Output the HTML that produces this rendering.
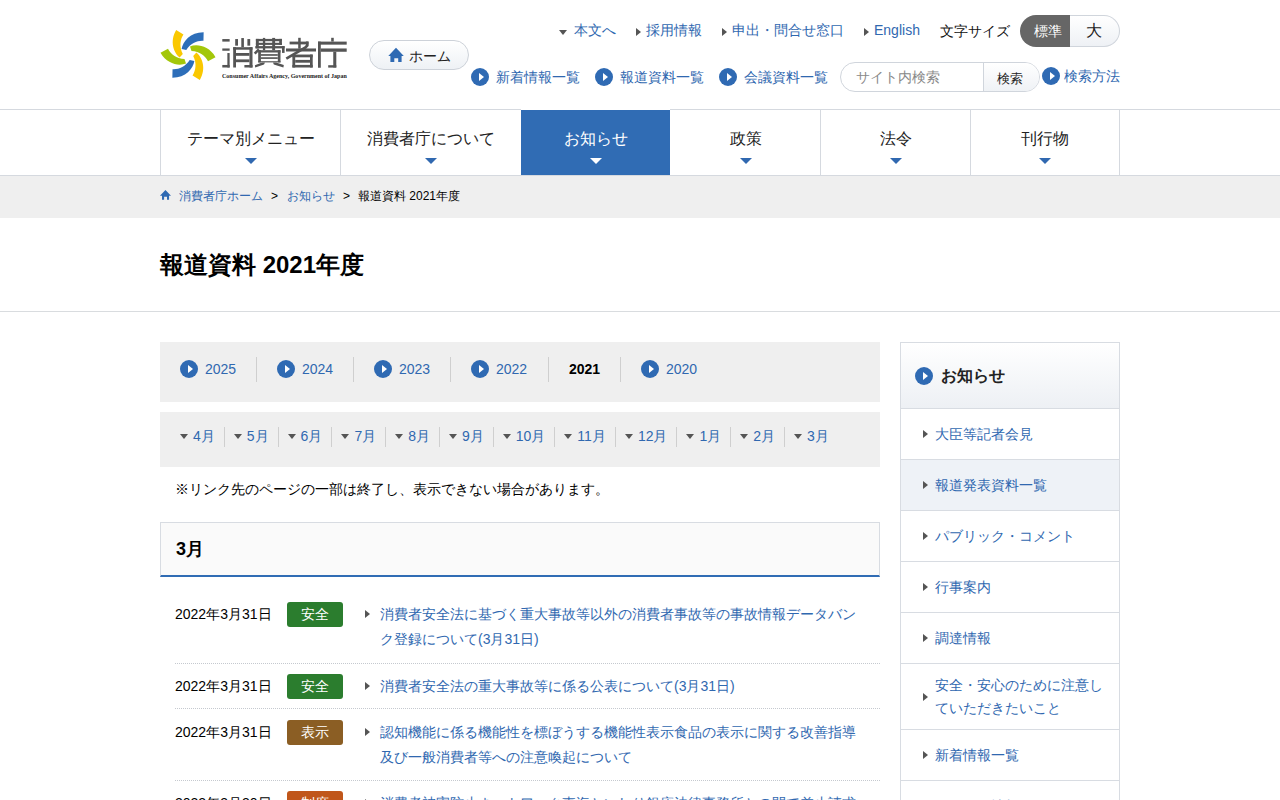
<!DOCTYPE html>
<html lang="ja"><head><meta charset="utf-8"><title>報道資料 2021年度 | 消費者庁</title>
<style>
*{box-sizing:border-box;margin:0;padding:0}
html,body{width:1280px;height:800px;overflow:hidden;background:#fff}
body{font-family:"Liberation Sans",sans-serif;color:#222;font-size:14px;position:relative}
a{color:#3068b0;text-decoration:none}
.abs{position:absolute;white-space:nowrap}
.ci{position:absolute;width:18px;height:18px;border-radius:50%;background:#2f6ab3}
.ci:after{content:"";position:absolute;left:8px;top:5px;border-left:5.5px solid #fff;border-top:4px solid transparent;border-bottom:4px solid transparent}
.tri-r{position:absolute;width:0;height:0;border-left:5px solid #555;border-top:4px solid transparent;border-bottom:4px solid transparent}
.tri-d{position:absolute;width:0;height:0;border-top:5px solid #555;border-left:4px solid transparent;border-right:4px solid transparent}
/* header */
#hdr-line{position:absolute;left:0;top:109px;width:1280px;height:1px;background:#d5d9df}
#nav{position:absolute;left:0;top:0;width:1280px;height:176px}
#nav .nb{position:absolute;top:109px;height:66px;background:#306cb4;border-top:1px solid #fff}
#nav .nl{position:absolute;top:110px;width:1px;height:65px;background:#d5d9df}
#nav .nt{position:absolute;top:129px;text-align:center;font-size:16px;color:#222;height:40px;line-height:20px}
#nav .nt i{position:absolute;left:50%;margin-left:-6px;top:29px;border-top:6px solid #3068b0;border-left:6px solid transparent;border-right:6px solid transparent}
#nav .nt.on{color:#fff}
#nav .nt.on i{border-top-color:#fff}
#navbot{position:absolute;left:0;top:175px;width:1280px;height:1px;background:#d5d9df}
#bc{position:absolute;left:0;top:176px;width:1280px;height:42px;background:#efefef;font-size:12px}
#title{position:absolute;left:160px;top:249px;font-size:24px;font-weight:bold;color:#000;white-space:nowrap}
#hr{position:absolute;left:0;top:311px;width:1280px;height:1px;background:#d9dcdf}
/* years */
#years{position:absolute;left:160px;top:342px;width:720px;height:60px;background:#efefef}
#months{position:absolute;left:160px;top:412px;width:720px;height:55px;background:#efefef}
.sep{position:absolute;width:1px;background:#cfcfcf}
#note{position:absolute;left:175px;top:481px;font-size:14px;color:#000;white-space:nowrap}
#mh{position:absolute;left:160px;top:522px;width:720px;height:55px;background:#fafafa;border:1px solid #d8dce2;border-bottom:2px solid #306cb4}
#mh b{position:absolute;left:15px;top:13.5px;font-size:18px;color:#000}
.row{position:absolute;left:175px;width:705px}
.row:before,.row:after{content:"";position:absolute;bottom:0;height:0;border-bottom:1px dotted #c5c9cf}
.row:before{left:0;width:183px}.row:after{left:182px;width:523px}
.row.nb:before,.row.nb:after{display:none}
.date{position:absolute;left:0;font-size:14px;color:#000;white-space:nowrap}
.badge{position:absolute;left:112px;width:56px;height:25px;border-radius:3px;color:#fff;font-size:14px;text-align:center;line-height:25px}
.g{background:#2b7d2e}.br{background:#8b5e24}.or{background:#c0561a}
.ltxt{position:absolute;left:205px;width:485px;font-size:14px;line-height:24.5px;color:#3068b0}
.ltxt .tri-r{left:-15px;top:8px;border-left-color:#555}
#months{display:flex;padding-left:11px;padding-top:15px}
.mi{position:relative;display:block;height:20px;padding:0 9px 0 9px;border-right:1px solid #cfcfcf;font-size:14px;line-height:20px}
.mi.last{border-right:none}
.mi a{position:relative;top:-1px}
.mi i{display:inline-block;vertical-align:top;margin-top:6.6px;margin-right:5px;width:0;height:0;border-top:5px solid #555;border-left:4px solid transparent;border-right:4px solid transparent}
/* sidebar */
#side{position:absolute;left:900px;top:342px;width:220px;height:470px;border:1px solid #d8dce2;border-bottom:none}
#side .hd{position:relative;height:66px;border-bottom:1px solid #d8dce2;background:linear-gradient(#fff,#edf0f4)}
#side .hd b{position:absolute;left:40px;top:23px;font-size:16px;color:#222}
#side .it{position:relative;height:51px;border-bottom:1px solid #d8dce2;font-size:14px;color:#3068b0}
#side .it.hl{background:#eef2f7}
#side .it span{position:absolute;left:34px;top:16px;white-space:nowrap;line-height:18px}
#side .it .tri-r{left:22px;top:21px}
</style></head><body>

<!-- logo -->
<svg class="abs" style="left:157.5px;top:25.1px" width="60" height="60" viewBox="-30 -30 60 60">
 <g>
  <path d="M2,-8.5 C9,-11.3 21,-9.3 27.5,2.2 L20,6.3 C17.5,1 11.5,-3.6 3.5,-4 Z" fill="#a3c70a" transform="rotate(0)"/>
  <path d="M2,-8.5 C9,-11.3 21,-9.3 27.5,2.2 L20,6.3 C17.5,1 11.5,-3.6 3.5,-4 Z" fill="#fac800" transform="rotate(60)"/>
  <path d="M2,-8.5 C9,-11.3 21,-9.3 27.5,2.2 L20,6.3 C17.5,1 11.5,-3.6 3.5,-4 Z" fill="#2d6eb9" transform="rotate(120)"/>
  <path d="M2,-8.5 C9,-11.3 21,-9.3 27.5,2.2 L20,6.3 C17.5,1 11.5,-3.6 3.5,-4 Z" fill="#a3c70a" transform="rotate(180)"/>
  <path d="M2,-8.5 C9,-11.3 21,-9.3 27.5,2.2 L20,6.3 C17.5,1 11.5,-3.6 3.5,-4 Z" fill="#fac800" transform="rotate(240)"/>
  <path d="M2,-8.5 C9,-11.3 21,-9.3 27.5,2.2 L20,6.3 C17.5,1 11.5,-3.6 3.5,-4 Z" fill="#2d6eb9" transform="rotate(300)"/>
 </g>
</svg>
<svg class="abs" style="left:0;top:0" width="360" height="90" viewBox="0 0 360 90"><g fill="#555"><rect x="222.3" y="39.06" width="7.35" height="2.54"/><rect x="222.3" y="48.46" width="7.35" height="2.28"/><rect x="227.36" y="53.03" width="2.29" height="14.47"/><rect x="222.3" y="64.96" width="7.35" height="2.54"/><rect x="235.2" y="39.06" width="2.8" height="6.61"/><rect x="241.3" y="38.05" width="2.6" height="9.15"/><rect x="247.4" y="39.06" width="2.8" height="6.61"/><rect x="233.2" y="47.2" width="2.8" height="20.3"/><rect x="233.2" y="47.2" width="19.3" height="2.5"/><rect x="249.45" y="47.2" width="3.05" height="20.3"/><rect x="236" y="53" width="13.45" height="2.8"/><rect x="236" y="59.4" width="13.45" height="2.8"/><rect x="244.4" y="65" width="8.1" height="2.5"/><rect x="255.9" y="38.9" width="26.0" height="2.3"/><rect x="255.9" y="42.8" width="26.0" height="2.1"/><rect x="255.3" y="46.1" width="29.3" height="2.3"/><rect x="262.9" y="37.9" width="2.3" height="12.3"/><rect x="272.2" y="37.9" width="2.9" height="12.3"/><rect x="255.9" y="38.9" width="2.9" height="9.5"/><rect x="279.2" y="38.9" width="2.7" height="6.0"/><rect x="282" y="46.1" width="2.6" height="6.8"/><polyline points="258.9,49.3 254.7,53.6" fill="none" stroke="#555" stroke-width="2.6"/><rect x="258.2" y="50.2" width="22.3" height="2.3"/><rect x="258.2" y="50.2" width="2.7" height="12.2"/><rect x="277.8" y="50.2" width="2.7" height="12.2"/><rect x="260.9" y="54.15" width="16.9" height="1.65"/><rect x="260.9" y="57.25" width="16.9" height="1.65"/><rect x="258.2" y="61.2" width="22.3" height="1.2"/><polygon points="262,62.4 265,62.4 264,64.5 255.2,67.4 254.9,65.3"/><polygon points="273,62.4 276.2,62.4 283.8,65 283.4,67.4 273.8,64.6"/><rect x="298.2" y="37.8" width="2.5" height="10.9"/><rect x="289.6" y="41.6" width="18.8" height="2.8"/><rect x="286" y="48.46" width="30" height="3.04"/><polyline points="307.3,41.6 307.3,45.5 305.5,47.5 286.3,58.6" fill="none" stroke="#555" stroke-width="2.7"/><rect x="292.4" y="54.55" width="20.3" height="2.75"/><rect x="292.4" y="54.55" width="2.8" height="12.95"/><rect x="310" y="54.55" width="2.7" height="12.95"/><rect x="295.2" y="59.9" width="14.8" height="2.8"/><rect x="292.4" y="64.9" width="20.3" height="2.6"/><rect x="331.2" y="37.8" width="2.55" height="3.8"/><rect x="318" y="41.6" width="28.7" height="3.05"/><rect x="318" y="41.6" width="2.8" height="26.15"/><rect x="320.8" y="48.46" width="25.9" height="3.3"/><rect x="333.25" y="51.76" width="3.05" height="15.74"/><rect x="328.2" y="65.2" width="8.1" height="2.4"/></g></svg>
<div class="abs" style="left:222px;top:71.5px;font-family:'Liberation Serif',serif;font-size:6.5px;font-weight:bold;color:#222;transform:scaleX(0.925);transform-origin:0 0">Consumer Affairs Agency, Government of Japan</div>

<!-- home button -->
<div class="abs" style="left:369px;top:40px;width:100px;height:30px;border:1px solid #cdd2d9;border-radius:15px;background:linear-gradient(#fff,#eef1f5)"></div>
<svg class="abs" style="left:388px;top:47px" width="16" height="15" viewBox="0 0 16 15"><path d="M8 0.8 L15.8 9.1 L13.6 9.1 L13.6 14.9 L10.2 14.9 L10.2 11.3 L6.3 11.3 L6.3 14.9 L2.4 14.9 L2.4 9.1 L0.3 9.1 Z" fill="#2f6ab3"/></svg>
<div class="abs" style="left:409px;top:48px;font-size:14px;color:#222">ホーム</div>

<!-- top links -->
<div class="tri-d" style="left:559px;top:30px"></div>
<a class="abs" style="left:574px;top:22px" href="#">本文へ</a>
<div class="tri-r" style="left:636px;top:28px"></div>
<a class="abs" style="left:646px;top:22px" href="#">採用情報</a>
<div class="tri-r" style="left:722px;top:28px"></div>
<a class="abs" style="left:732px;top:22px" href="#">申出・問合せ窓口</a>
<div class="tri-r" style="left:864px;top:28px"></div>
<a class="abs" style="left:874px;top:22px" href="#">English</a>
<div class="abs" style="left:940px;top:23px;color:#111">文字サイズ</div>
<div class="abs" style="left:1020px;top:15px;width:50px;height:32px;border-radius:16px 0 0 16px;background:#666"></div>
<div class="abs" style="left:1070px;top:15px;width:50px;height:32px;border:1px solid #d0d5dc;border-left:none;border-radius:0 16px 16px 0;background:linear-gradient(#fff,#eef1f5)"></div>
<div class="abs" style="left:1034px;top:23px;color:#fff;font-size:14px">標準</div>
<div class="abs" style="left:1086px;top:21px;color:#222;font-size:16px">大</div>

<div class="ci" style="left:471px;top:68px"></div>
<a class="abs" style="left:496px;top:69px" href="#">新着情報一覧</a>
<div class="ci" style="left:595px;top:68px"></div>
<a class="abs" style="left:620px;top:69px" href="#">報道資料一覧</a>
<div class="ci" style="left:719px;top:68px"></div>
<a class="abs" style="left:744px;top:69px" href="#">会議資料一覧</a>
<div class="abs" style="left:840px;top:62px;width:200px;height:30px;border:1px solid #d0d5dc;border-radius:15px;background:#fff;overflow:hidden">
 <div style="position:absolute;left:142px;top:0;width:58px;height:30px;border-left:1px solid #d0d5dc;background:linear-gradient(#fff,#eef1f5)"></div>
 <div style="position:absolute;left:15px;top:6px;color:#888;font-size:13.5px">サイト内検索</div>
 <div style="position:absolute;left:156px;top:7px;color:#222;font-size:13px">検索</div>
</div>
<div class="ci" style="left:1042px;top:67px"></div>
<a class="abs" style="left:1064px;top:68px" href="#">検索方法</a>

<div id="hdr-line"></div>
<div id="nav">
 <div class="nb" style="left:521px;width:149px"></div>
 <div class="nl" style="left:160px"></div>
 <div class="nl" style="left:340px"></div>
 <div class="nl" style="left:820px"></div>
 <div class="nl" style="left:970px"></div>
 <div class="nl" style="left:1119px"></div>
 <div class="nt" style="left:161px;width:180px">テーマ別メニュー<i></i></div>
 <div class="nt" style="left:341px;width:180px">消費者庁について<i></i></div>
 <div class="nt on" style="left:521px;width:150px">お知らせ<i></i></div>
 <div class="nt" style="left:671px;width:150px">政策<i></i></div>
 <div class="nt" style="left:821px;width:150px">法令<i></i></div>
 <div class="nt" style="left:970px;width:150px">刊行物<i></i></div>
</div>
<div id="navbot"></div>

<div id="bc">
 <svg class="abs" style="left:159px;top:13px" width="13" height="12" viewBox="0 0 13 12"><path d="M6.46 1.05 L12 6.7 L10.06 6.7 L10.06 10.85 L8 10.85 L8 7.8 L5.1 7.8 L5.1 10.85 L3 10.85 L3 6.7 L0.94 6.7 Z" fill="#2f6ab3"/></svg>
 <a class="abs" style="left:179px;top:12px" href="#">消費者庁ホーム</a>
 <div class="abs" style="left:271px;top:13px;color:#000">&gt;</div>
 <a class="abs" style="left:287px;top:12px" href="#">お知らせ</a>
 <div class="abs" style="left:343px;top:13px;color:#000">&gt;</div>
 <div class="abs" style="left:358px;top:12px;color:#000">報道資料 2021年度</div>
</div>

<div id="title">報道資料 2021年度</div>
<div id="hr"></div>

<div id="years">
 <div class="ci" style="left:20px;top:18px"></div><a class="abs" style="left:45px;top:19px;font-size:14px" href="#">2025</a>
 <div class="sep" style="left:96px;top:15px;height:25px"></div>
 <div class="ci" style="left:117px;top:18px"></div><a class="abs" style="left:142px;top:19px;font-size:14px" href="#">2024</a>
 <div class="sep" style="left:193px;top:15px;height:25px"></div>
 <div class="ci" style="left:214px;top:18px"></div><a class="abs" style="left:239px;top:19px;font-size:14px" href="#">2023</a>
 <div class="sep" style="left:290px;top:15px;height:25px"></div>
 <div class="ci" style="left:311px;top:18px"></div><a class="abs" style="left:336px;top:19px;font-size:14px" href="#">2022</a>
 <div class="sep" style="left:388px;top:15px;height:25px"></div>
 <b class="abs" style="left:409px;top:19px;font-size:14px;color:#000">2021</b>
 <div class="sep" style="left:460px;top:15px;height:25px"></div>
 <div class="ci" style="left:481px;top:18px"></div><a class="abs" style="left:506px;top:19px;font-size:14px" href="#">2020</a>
</div>

<div id="months"><span class="mi"><i></i><a href="#">4月</a></span><span class="mi"><i></i><a href="#">5月</a></span><span class="mi"><i></i><a href="#">6月</a></span><span class="mi"><i></i><a href="#">7月</a></span><span class="mi"><i></i><a href="#">8月</a></span><span class="mi"><i></i><a href="#">9月</a></span><span class="mi"><i></i><a href="#">10月</a></span><span class="mi"><i></i><a href="#">11月</a></span><span class="mi"><i></i><a href="#">12月</a></span><span class="mi"><i></i><a href="#">1月</a></span><span class="mi"><i></i><a href="#">2月</a></span><span class="mi last"><i></i><a href="#">3月</a></span></div>

<div id="note">※リンク先のページの一部は終了し、表示できない場合があります。</div>

<div id="mh"><b>3月</b></div>

<div class="row" style="top:592px;height:72px">
 <div class="date" style="top:14px">2022年3月31日</div>
 <div class="badge g" style="top:10px">安全</div>
 <div class="ltxt" style="top:10px"><i class="tri-r"></i><a href="#">消費者安全法に基づく重大事故等以外の消費者事故等の事故情報データバンク登録について(3月31日)</a></div>
</div>
<div class="row" style="top:664px;height:45px">
 <div class="date" style="top:14px">2022年3月31日</div>
 <div class="badge g" style="top:10px">安全</div>
 <div class="ltxt" style="top:10px"><i class="tri-r"></i><a href="#">消費者安全法の重大事故等に係る公表について(3月31日)</a></div>
</div>
<div class="row" style="top:709px;height:72px">
 <div class="date" style="top:15px">2022年3月31日</div>
 <div class="badge br" style="top:11px">表示</div>
 <div class="ltxt" style="top:11px"><i class="tri-r"></i><a href="#">認知機能に係る機能性を標ぼうする機能性表示食品の表示に関する改善指導及び一般消費者等への注意喚起について</a></div>
</div>
<div class="row nb" style="top:781px;height:72px">
 <div class="date" style="top:14px">2022年3月30日</div>
 <div class="badge or" style="top:10px">制度</div>
 <div class="ltxt" style="top:10px"><i class="tri-r"></i><a href="#">消費者被害防止ネットワーク東海といしり銀座法律事務所との間で差止請求に関する協議が調ったことについて</a></div>
</div>

<div id="side">
 <div class="hd"><div class="ci" style="left:14px;top:24px"></div><b>お知らせ</b></div>
 <div class="it"><i class="tri-r"></i><span>大臣等記者会見</span></div>
 <div class="it hl"><i class="tri-r"></i><span>報道発表資料一覧</span></div>
 <div class="it"><i class="tri-r"></i><span>パブリック・コメント</span></div>
 <div class="it"><i class="tri-r"></i><span>行事案内</span></div>
 <div class="it"><i class="tri-r"></i><span>調達情報</span></div>
 <div class="it" style="height:66px"><i class="tri-r" style="top:29px"></i><span style="top:10px;line-height:23px;white-space:normal;width:180px">安全・安心のために注意していただきたいこと</span></div>
 <div class="it"><i class="tri-r"></i><span>新着情報一覧</span></div>
 <div class="it"><i class="tri-r"></i><span>リコール情報サイト</span></div>
</div>

</body></html>
